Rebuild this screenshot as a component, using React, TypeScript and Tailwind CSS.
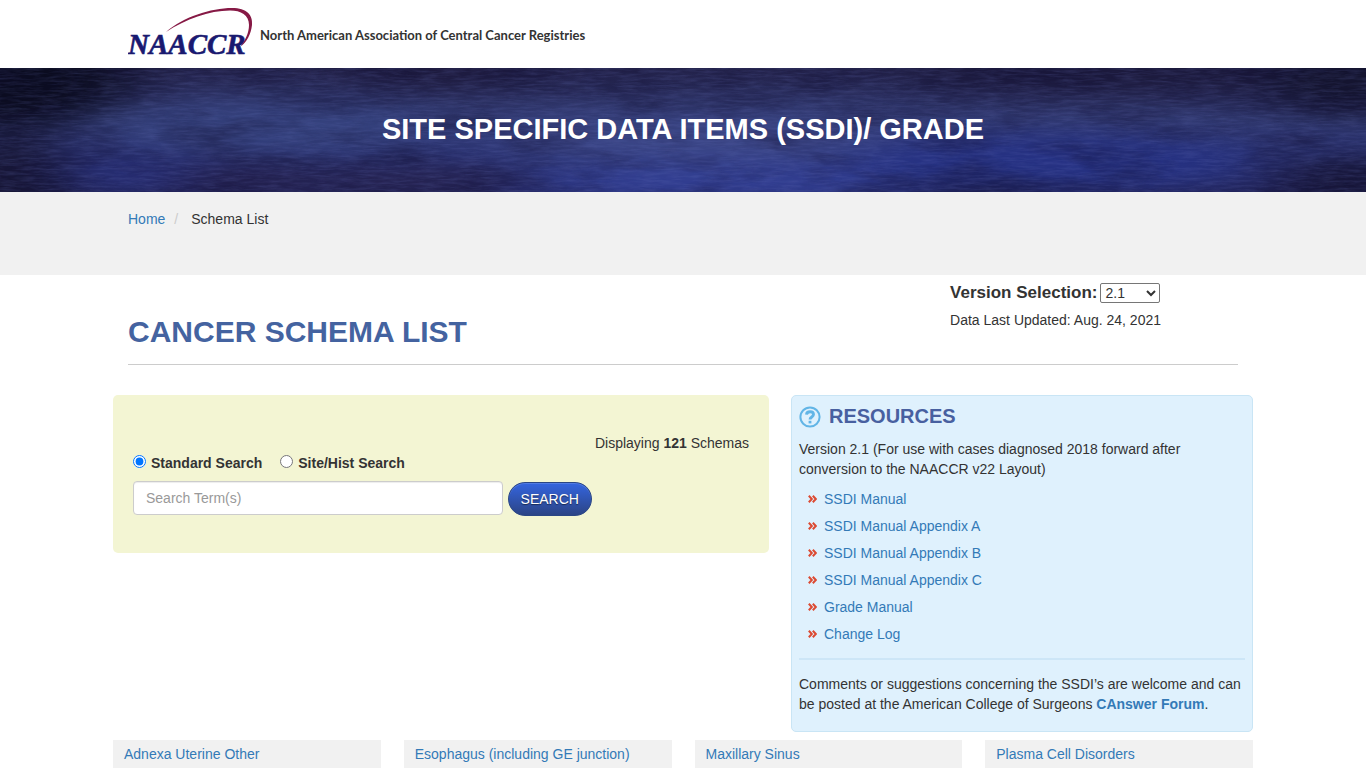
import React, { useState } from "react";

const resources = [
  "SSDI Manual",
  "SSDI Manual Appendix A",
  "SSDI Manual Appendix B",
  "SSDI Manual Appendix C",
  "Grade Manual",
  "Change Log",
];

const schemas = [
  "Adnexa Uterine Other",
  "Esophagus (including GE junction)",
  "Maxillary Sinus",
  "Plasma Cell Disorders",
];

const linkClass = "text-[#337ab7] hover:underline";

function Logo() {
  return (
    <svg width="128" height="60" viewBox="0 0 128 60" role="img" aria-label="NAACCR" className="shrink-0">
      <text
        x="0"
        y="49"
        fill="#191970"
        stroke="#191970"
        strokeWidth="0.6"
        fontSize="29"
        fontWeight="700"
        fontStyle="italic"
        fontFamily="'Liberation Serif', serif"
      >
        NAACCR
      </text>
      <path
        d="M38 27 C55 12 83 3 104 3 C119 3 125 10 124 20 C123 29 119 37 112 42 C117 36 121 28 121 20 C121 10 113 5.500 102 5.500 C81 5.500 58 14 38 27 Z"
        fill="#861945"
      />
    </svg>
  );
}

function BannerTexture() {
  return (
    <svg className="absolute inset-0 h-full w-full" viewBox="0 0 1366 124" preserveAspectRatio="none" aria-hidden="true">
      <defs>
        <linearGradient id="base" x1="0" y1="0" x2="0" y2="1">
          <stop offset="0" stopColor="#23224a" />
          <stop offset="0.4" stopColor="#30386f" />
          <stop offset="0.7" stopColor="#2a3272" />
          <stop offset="1" stopColor="#22245a" />
        </linearGradient>
        <filter
          id="soft"
          filterUnits="userSpaceOnUse"
          x="-200"
          y="-100"
          width="1766"
          height="324"
          colorInterpolationFilters="sRGB"
        >
          <feGaussianBlur stdDeviation="34 13" />
        </filter>
        <filter id="grain" x="0" y="0" width="100%" height="100%" colorInterpolationFilters="sRGB">
          <feTurbulence type="fractalNoise" baseFrequency="0.05 0.4" numOctaves="4" seed="8" />
          <feColorMatrix values="0 0 0 0 0.42  0 0 0 0 0.46  0 0 0 0 0.75  1.1 0 0 0 -0.4" />
        </filter>
        <filter id="shade" x="0" y="0" width="100%" height="100%" colorInterpolationFilters="sRGB">
          <feTurbulence type="fractalNoise" baseFrequency="0.012 0.04" numOctaves="5" seed="21" />
          <feColorMatrix values="0 0 0 0 0.07  0 0 0 0 0.06  0 0 0 0 0.2  1.8 0 0 0 -0.75" />
        </filter>
      </defs>
      <rect width="1366" height="124" fill="url(#base)" />
      <g filter="url(#soft)">
        <ellipse cx="10" cy="10" rx="120" ry="50" fill="#0b0c20" />
        <ellipse cx="10" cy="110" rx="60" ry="50" fill="#171633" />
        <ellipse cx="130" cy="105" rx="80" ry="14" fill="#28307b" />
        <ellipse cx="270" cy="60" rx="170" ry="24" fill="#35427e" />
        <ellipse cx="250" cy="112" rx="80" ry="16" fill="#211d48" />
        <ellipse cx="400" cy="114" rx="130" ry="16" fill="#25224f" />
        <ellipse cx="440" cy="0" rx="90" ry="18" fill="#1c193c" />
        <ellipse cx="690" cy="70" rx="200" ry="24" fill="#3b4686" />
        <ellipse cx="720" cy="115" rx="210" ry="20" fill="#323f94" />
        <ellipse cx="1050" cy="95" rx="200" ry="26" fill="#263284" />
        <ellipse cx="980" cy="130" rx="60" ry="16" fill="#17163d" />
        <ellipse cx="1150" cy="0" rx="260" ry="26" fill="#1c1a3d" />
        <ellipse cx="1350" cy="10" rx="80" ry="40" fill="#14142f" />
        <ellipse cx="1355" cy="115" rx="70" ry="30" fill="#171638" />
      </g>
      <rect width="1366" height="124" filter="url(#shade)" opacity="0.5" />
      <rect width="1366" height="124" filter="url(#grain)" opacity="0.35" />
    </svg>
  );
}

function SearchPanel() {
  const [mode, setMode] = useState("standard");
  return (
    <section className="self-start rounded-[5px] bg-[#f3f5d3] px-5 pt-[38px] pb-[37px]">
      <p className="text-right">
        Displaying <b>121</b> Schemas
      </p>
      <form onSubmit={(e) => e.preventDefault()}>
        <div className="flex gap-[18px] font-bold">
          <label className="flex items-center gap-[5px]">
            <input
              type="radio"
              name="mode"
              className="mb-[3px] h-[13px] w-[13px]"
              checked={mode === "standard"}
              onChange={() => setMode("standard")}
            />
            Standard Search
          </label>
          <label className="flex items-center gap-[5px]">
            <input
              type="radio"
              name="mode"
              className="mb-[3px] h-[13px] w-[13px]"
              checked={mode === "site"}
              onChange={() => setMode("site")}
            />
            Site/Hist Search
          </label>
        </div>
        <div className="mt-2 flex items-end gap-[5px]">
          <input
            type="text"
            aria-label="Search Term(s)"
            placeholder="Search Term(s)"
            className="mb-px h-[34px] w-3/5 rounded border border-[#ccc] bg-white px-3 shadow-[inset_0_1px_1px_rgba(0,0,0,0.075)] placeholder:text-[#999]"
          />
          <button
            type="submit"
            className="h-[34px] rounded-full border border-[#2a4685] bg-linear-to-b from-[#3465e0] to-[#2b4486] px-3 text-white shadow-[inset_0_1px_0_rgba(255,255,255,0.15)] [text-shadow:0_1px_1px_rgba(0,0,0,0.5)]"
          >
            SEARCH
          </button>
        </div>
      </form>
    </section>
  );
}

function ResourcesPanel() {
  return (
    <aside className="rounded-[5px] border border-[#c9e5f5] bg-[#dff1fd] px-[7px] pt-2 pb-[17px]">
      <h2 className="flex items-center gap-2 text-xl leading-6 font-bold text-[#4860a0]">
        <svg width="22" height="22" viewBox="0 0 22 22" fill="none" aria-hidden="true" className="mt-[2px]">
          <circle cx="11" cy="11" r="9.600" stroke="#62b5e6" strokeWidth="2" />
          <path d="M7.500 8.600 C7.800 4.800 14.500 4.800 14.500 8.600 C14.500 11 11 11 11 13.500" stroke="#62b5e6" strokeWidth="2.900" />
          <rect x="9.600" y="14.800" width="2.800" height="2.600" fill="#62b5e6" />
        </svg>
        RESOURCES
      </h2>
      <p className="mt-[11px]">
        Version 2.1 (For use with cases diagnosed 2018 forward after conversion to the NAACCR v22 Layout)
      </p>
      <ul className="mt-[10px] flex flex-col gap-[7px] pl-[9px]">
        {resources.map((name) => (
          <li key={name} className="flex items-center gap-[7px]">
            <svg width="9" height="8" viewBox="0 0 9 8" fill="none" stroke="#dc4a32" strokeWidth="2" aria-hidden="true">
              <path d="M0.800 0.800 L3.800 4 L0.800 7.200 M4.800 0.800 L7.800 4 L4.800 7.200" />
            </svg>
            <a href="#" className={linkClass}>
              {name}
            </a>
          </li>
        ))}
      </ul>
      <hr className="mt-[14px] border-t-2 border-[#cde6f7]" />
      <p className="mt-[14px]">
        Comments or suggestions concerning the SSDI’s are welcome and can be posted at the American College of Surgeons{" "}
        <a href="#" className="font-bold text-[#337ab7] hover:underline">
          CAnswer Forum
        </a>
        .
      </p>
    </aside>
  );
}

export default function App() {
  return (
    <div className="bg-white font-['Liberation_Sans',Arial,sans-serif] text-sm leading-5 text-[#333]">
      <header className="mx-auto flex h-[68px] max-w-[1140px] items-center gap-1 px-[15px] pt-[2px]">
        <Logo />
        <span className="font-['Lato',sans-serif] text-[13px] font-bold">
          North American Association of Central Cancer Registries
        </span>
      </header>

      <div className="relative flex h-[124px] items-center justify-center overflow-hidden bg-[#272b60] pb-[2px]">
        <BannerTexture />
        <p className="relative text-center text-[29px] leading-9 font-bold text-white">
          SITE SPECIFIC DATA ITEMS (SSDI)/ GRADE
        </p>
      </div>

      <nav aria-label="Breadcrumb" className="bg-[#f1f1f1] pt-[17px] pb-[46px]">
        <ol className="mx-auto flex max-w-[1140px] px-[15px]">
          <li>
            <a href="#" className={linkClass}>
              Home
            </a>
          </li>
          <li aria-hidden="true" className="pr-[13px] pl-[9px] text-[#ccc]">
            /
          </li>
          <li>Schema List</li>
        </ol>
      </nav>

      <main className="mx-auto max-w-[1140px]">
        <div className="mx-[15px] flex items-end justify-between border-b border-[#ccc] pt-[7px] pb-[14px]">
          <h1 className="text-3xl font-bold text-[#4463a0]">CANCER SCHEMA LIST</h1>
          <div className="mr-[77px] mb-5">
            <div className="flex items-center gap-[3px]">
              <label htmlFor="version" className="text-[17px] leading-[22px] font-bold">
                Version Selection:
              </label>
              <select
                id="version"
                defaultValue="2.1"
                className="h-5 w-[60px] rounded-[2px] border border-[#767676] bg-white text-sm leading-4"
              >
                <option>2.1</option>
                <option>2.0</option>
                <option>1.7</option>
              </select>
            </div>
            <p className="mt-[6px]">Data Last Updated: Aug. 24, 2021</p>
          </div>
        </div>

        <div className="mt-[30px] grid grid-cols-[656fr_462fr] gap-[22px]">
          <SearchPanel />
          <ResourcesPanel />
        </div>

        <ul className="mt-2 grid grid-cols-4 gap-x-[23px]">
          {schemas.map((name) => (
            <li key={name} className="bg-[#f1f1f1] px-[11px] py-1">
              <a href="#" className={linkClass}>
                {name}
              </a>
            </li>
          ))}
        </ul>
      </main>
    </div>
  );
}
